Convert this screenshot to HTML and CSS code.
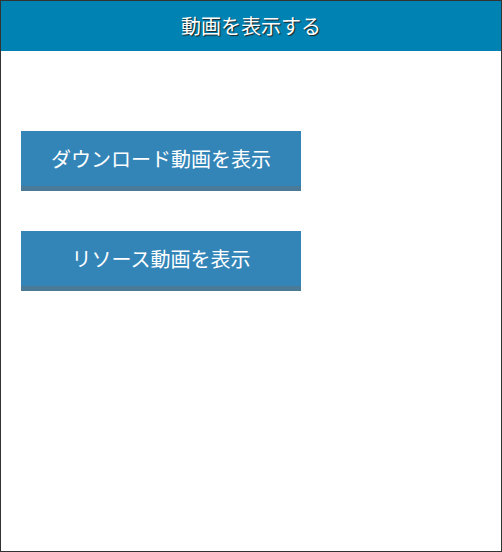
FILE: index.html
```html
<!DOCTYPE html>
<html lang="ja">
<head>
    <meta charset="UTF-8">
    <meta name="viewport" content="width=device-width, initial-scale=1.0">
    <link rel="stylesheet" href="styles.css">
</head>
<body>
    <div class="app">
        <div class="header">動画を表示する</div>
        <div class="content">
            <button class="video-btn">ダウンロード動画を表示</button>
            <button class="video-btn">リソース動画を表示</button>
        </div>
    </div>
</body>
</html>
```
FILE: styles.css
```css
html, body {
    margin: 0;
    padding: 0;
    height: 100%;
}
body {
    font-family: "Noto Sans CJK JP", "Noto Sans", sans-serif;
    background-color: #ffffff;
}
.app {
    box-sizing: border-box;
    height: 552px;
    border: 1px solid #333333;
}
.header {
    height: 50px;
    line-height: 50px;
    background-color: #0083b3;
    color: #ffffff;
    font-size: 20px;
    text-align: center;
    text-shadow: 1px 1px 1px #222222;
}
.content {
    display: flex;
    flex-direction: column;
    align-items: flex-start;
    gap: 40px;
    padding: 80px 20px 0;
}
.video-btn {
    box-sizing: border-box;
    width: 280px;
    height: 60px;
    padding: 0;
    border: none;
    border-bottom: 5px solid #4b7a96;
    background-color: #3385b8;
    color: #ffffff;
    font-family: inherit;
    font-size: 20px;
    cursor: pointer;
}
```
